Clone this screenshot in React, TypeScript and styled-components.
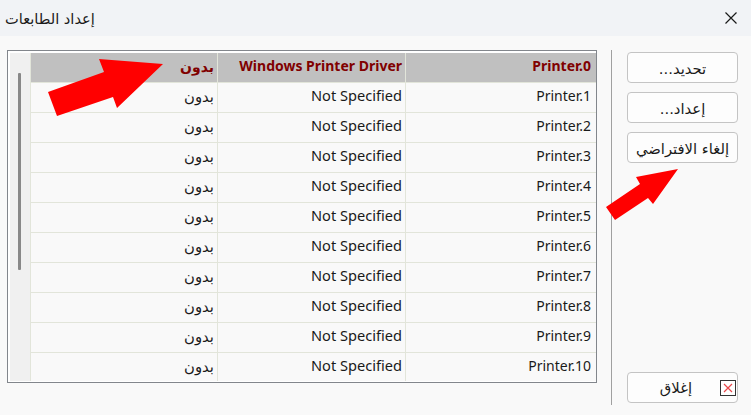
import React from 'react';
import styled, { createGlobalStyle } from 'styled-components';

const GlobalStyle = createGlobalStyle`
  html, body {
    margin: 0;
    padding: 0;
    width: 751px;
    height: 415px;
    overflow: hidden;
    background: #f9f9f9;
  }
`;

const FONT = `'DejaVu Sans', 'Noto Sans', sans-serif`;
const LATIN = `'Noto Sans', 'DejaVu Sans', sans-serif`;

const Window = styled.div`
  position: relative;
  width: 751px;
  height: 415px;
  display: flex;
  flex-direction: column;
  font-family: ${FONT};
  color: #1a1a1a;
`;

const TitleBar = styled.div`
  height: 36px;
  flex: none;
  display: flex;
  align-items: center;
  justify-content: space-between;
  padding: 0 13px 0 5px;
  background: #f1f3f6;
  font-size: 14.6px;
`;

const Body = styled.div`
  flex: 1;
  display: flex;
  padding: 14px 13px 10px 7px;
`;

const Frame = styled.div`
  width: 590px;
  height: 333px;
  box-sizing: border-box;
  display: flex;
  border: 1px solid #82868c;
  padding: 2px 0 1px 2px;
  background: #fff;
`;

const Gutter = styled.div`
  width: 20px;
  flex: none;
  padding: 20px 0 0 8px;
  box-sizing: border-box;
  background: #f0f0f0;
`;

const Thumb = styled.div`
  width: 3px;
  height: 197px;
  border-radius: 1px;
  background: #888;
`;

const Table = styled.div`
  flex: 1;
  display: flex;
  flex-direction: column;
  background: #f9f9f9;
  overflow: hidden;
`;

const Row = styled.div<{ $head?: boolean }>`
  height: 30px;
  flex: none;
  box-sizing: border-box;
  display: grid;
  grid-template-columns: 187px 188px 1fr;
  border-bottom: 1px solid #e2e5da;
  background: ${(p) => (p.$head ? '#c0c0c0' : 'transparent')};
  color: ${(p) => (p.$head ? '#800000' : '#1a1a1a')};
  font-weight: ${(p) => (p.$head ? 700 : 400)};
`;

// plain text column, right aligned like the other two
const Cell = styled.div<{ $head?: boolean }>`
  box-sizing: border-box;
  padding: 0 3px ${(p) => (p.$head ? 2 : 3)}px 0;
  display: flex;
  align-items: center;
  justify-content: flex-end;
  border-left: 1px solid #e2e5da;
  font-family: ${FONT};
  font-size: ${(p) => (p.$head ? 14 : 14.8)}px;
  white-space: nowrap;
`;

const DriverCell = styled(Cell)`
  padding-bottom: ${(p) => (p.$head ? 4 : 6)}px;
  font-family: ${LATIN};
  font-size: ${(p) => (p.$head ? 14 : 14.6)}px;
`;

const NameCell = styled(DriverCell)`
  padding-bottom: 4px;
  padding-right: 5px;
  font-size: 14px;
`;

const Divider = styled.div`
  width: 1px;
  height: 355px;
  margin: 0 15px 0 14px;
  flex: none;
  background: #a0a0a0;
`;

const Side = styled.div`
  flex: 1;
  display: flex;
  flex-direction: column;
  gap: 9px;
  padding: 2px 0;
`;

const Button = styled.button<{ $bottom?: boolean }>`
  height: 31px;
  width: 111px;
  flex: none;
  box-sizing: border-box;
  display: flex;
  align-items: center;
  justify-content: ${(p) => (p.$bottom ? 'flex-start' : 'center')};
  gap: 28px;
  padding: ${(p) => (p.$bottom ? '0 1px 0 0' : '2px 0 0')};
  border: 1px solid #c4c4c4;
  border-radius: 4px;
  background: #fdfdfd;
  font-family: ${FONT};
  font-size: 14.8px;
  color: #1a1a1a;
  margin-top: ${(p) => (p.$bottom ? 'auto' : '0')};
  direction: rtl;
`;

const Arrows = styled.svg`
  position: absolute;
  left: 0;
  top: 0;
  pointer-events: none;
`;

const CloseIcon = () => (
  <svg width="14" height="14" viewBox="0 0 14 14">
    <path d="M1.5 1.5 L12.5 12.5 M12.5 1.5 L1.5 12.5" stroke="#1a1a1a" strokeWidth="1.2" fill="none" />
  </svg>
);

const BoxX = () => (
  <svg width="16" height="16" viewBox="0 0 16 16">
    <rect x="0.5" y="0.5" width="15" height="15" fill="#fff" stroke="#333" />
    <path d="M4 4 L12 12 M12 4 L4 12" stroke="#e8474a" strokeWidth="1.2" fill="none" />
  </svg>
);

const rows = [1, 2, 3, 4, 5, 6, 7, 8, 9, 10];

export default function App() {
  return (
    <Window>
      <GlobalStyle />
      <TitleBar>
        <span>إعداد الطابعات</span>
        <CloseIcon />
      </TitleBar>
      <Body>
        <Frame>
          <Gutter>
            <Thumb />
          </Gutter>
          <Table>
            <Row $head>
              <Cell $head>بدون</Cell>
              <DriverCell $head>Windows Printer Driver</DriverCell>
              <NameCell $head>Printer.0</NameCell>
            </Row>
            {rows.map((n) => (
              <Row key={n}>
                <Cell>بدون</Cell>
                <DriverCell>Not Specified</DriverCell>
                <NameCell>Printer.{n}</NameCell>
              </Row>
            ))}
          </Table>
        </Frame>
        <Divider />
        <Side>
          <Button>تحديد...</Button>
          <Button>إعداد...</Button>
          <Button>إلغاء الافتراضي</Button>
          <Button $bottom>
            <BoxX />
            <span>إغلاق</span>
          </Button>
        </Side>
      </Body>
      <Arrows width="751" height="415" viewBox="0 0 751 415">
        <polygon points="163,64 99,59 104,72 48,92 57,116 113,97 117,108" fill="#ff0000" />
        <polygon points="678,169 636,177 640,184 606,207 615,220 648,198 653,204" fill="#ff0000" />
      </Arrows>
    </Window>
  );
}
